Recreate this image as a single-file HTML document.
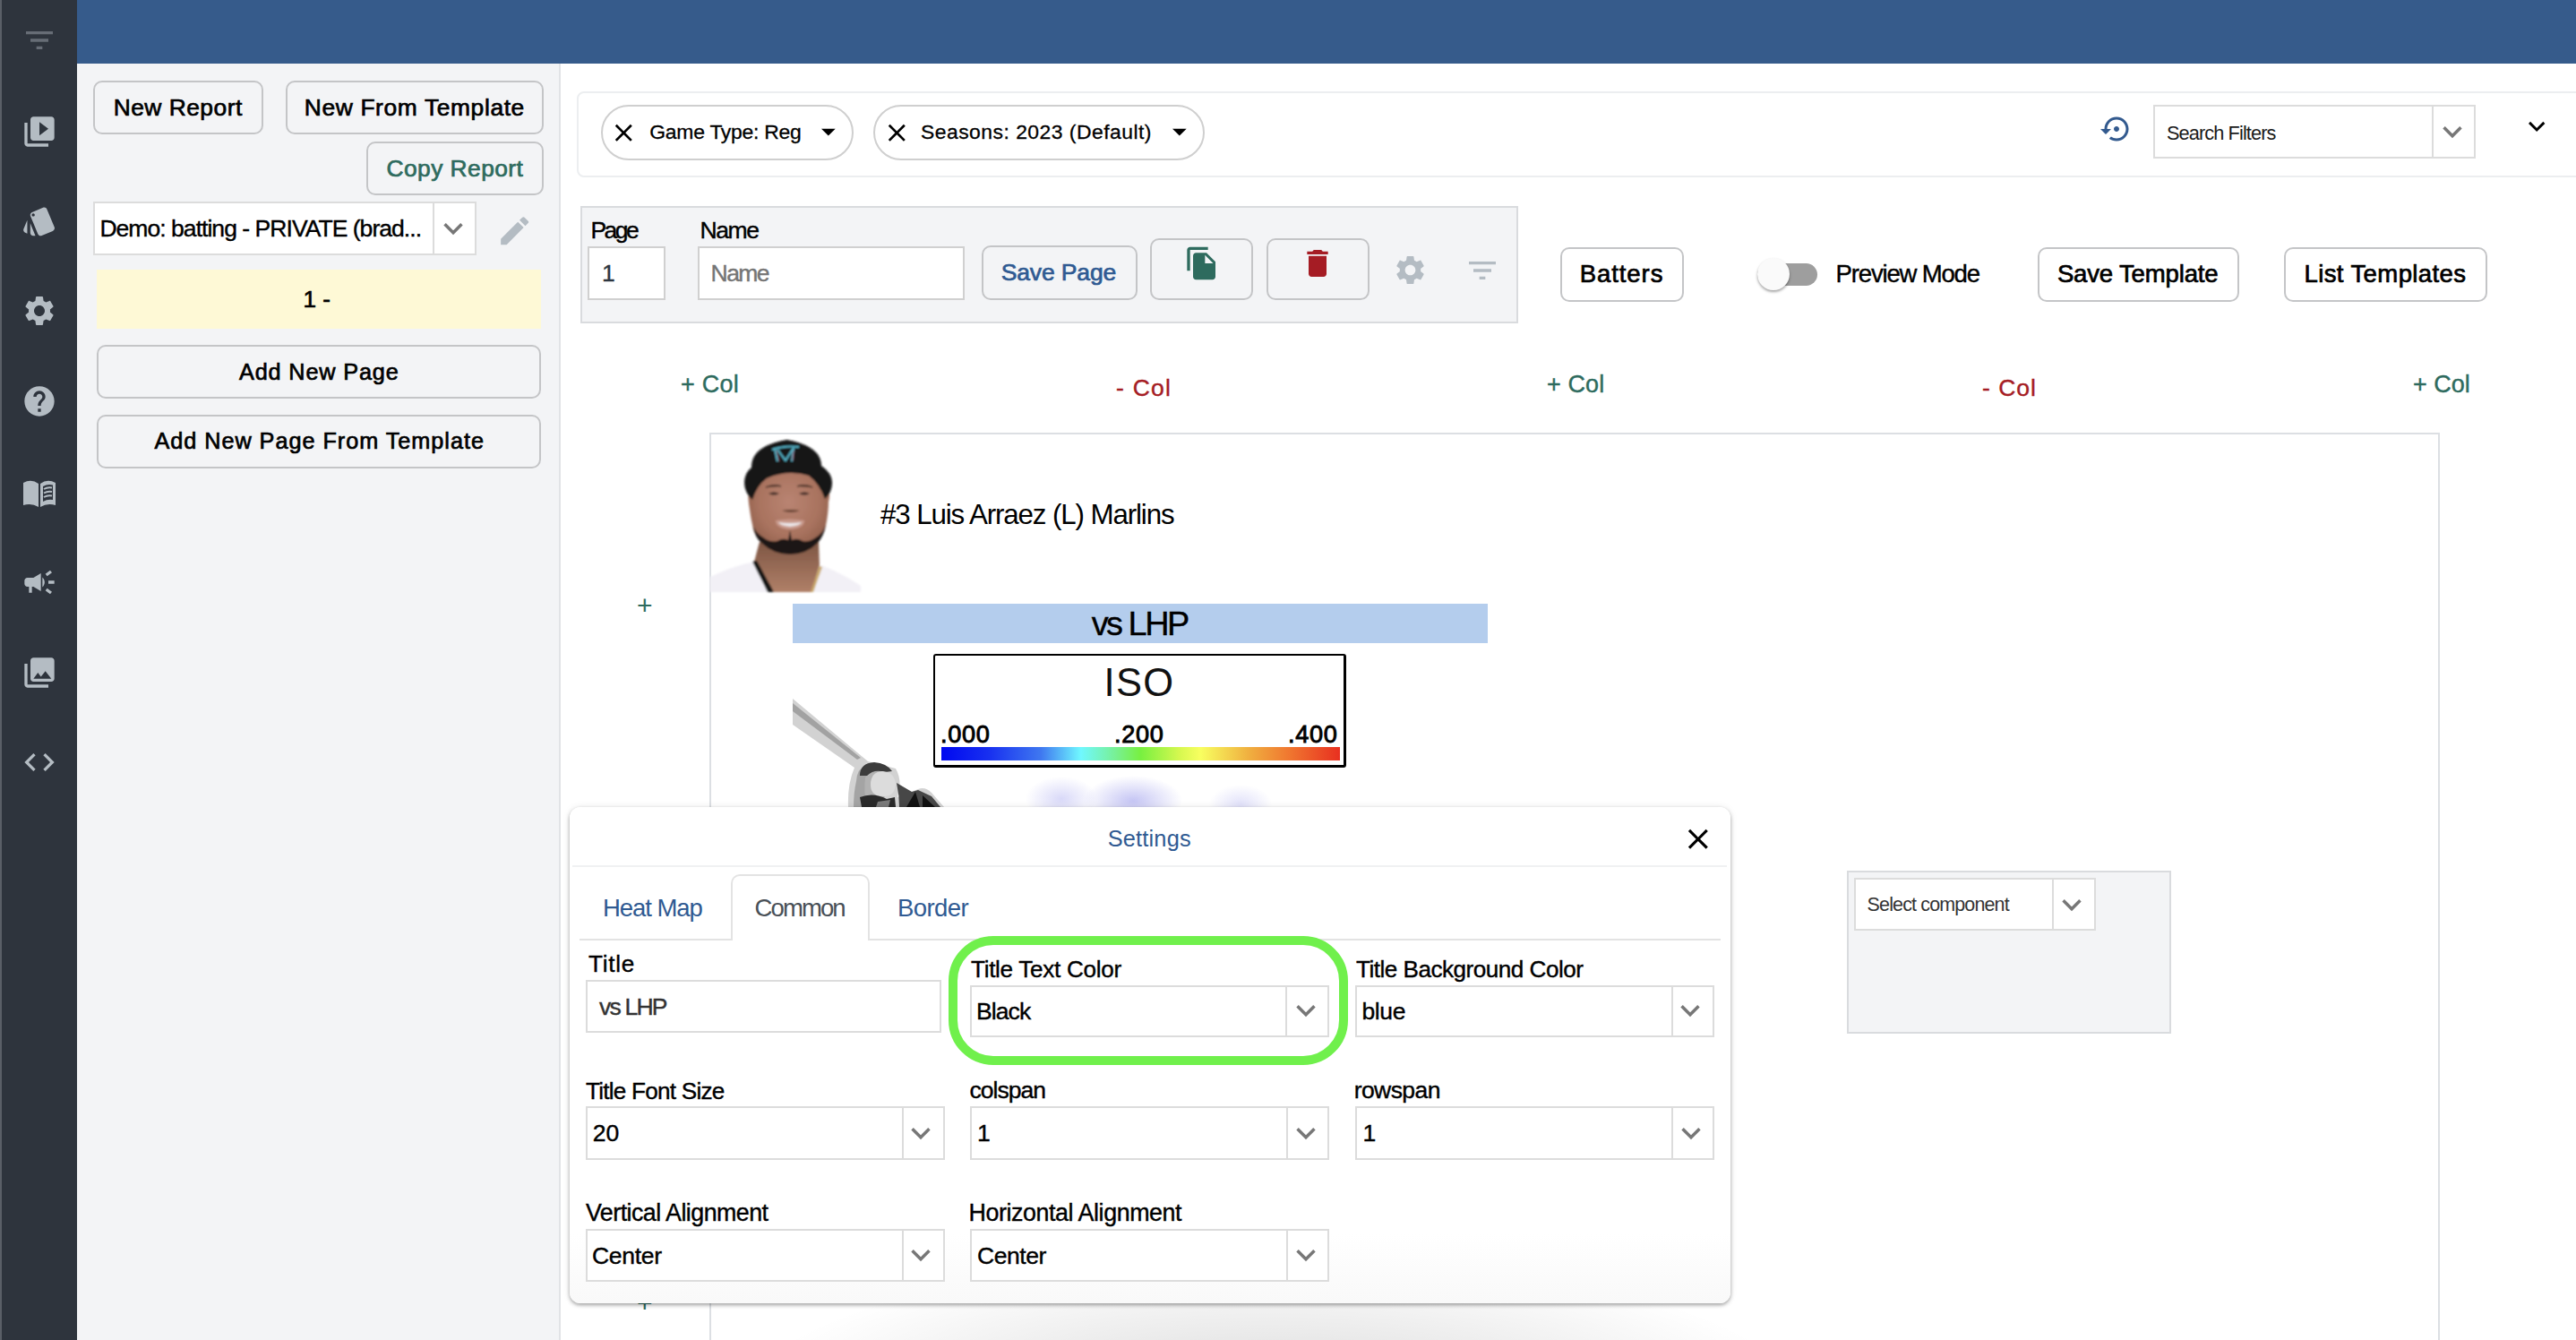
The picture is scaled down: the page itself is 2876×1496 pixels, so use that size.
<!DOCTYPE html>
<html><head><meta charset="utf-8">
<style>
html,body{margin:0;padding:0;}
body{width:2876px;height:1496px;position:relative;overflow:hidden;background:#fff;font-family:"Liberation Sans",sans-serif;color:#000;}
.a{position:absolute;box-sizing:border-box;}
.t{position:absolute;white-space:nowrap;line-height:1;font-family:"Liberation Sans",sans-serif;}
.btn{position:absolute;box-sizing:border-box;border:2px solid #c4c5c7;border-radius:10px;}
.sel{position:absolute;box-sizing:border-box;background:#fff;border:2px solid #dcdcdc;}
.sel .dv{position:absolute;top:0;bottom:0;width:2px;background:#dcdcdc;}
svg.i{position:absolute;overflow:visible;}
</style></head><body>

<!-- ================= sidebar ================= -->
<div class="a" style="left:0;top:0;width:2px;height:1496px;background:#5a5f67"></div>
<div class="a" style="left:2px;top:0;width:84px;height:1496px;background:#2e343d"></div>
<svg class="i" style="left:24px;top:25px" width="40" height="40" viewBox="0 0 24 24"><path fill="#676d76" d="M10 18h4v-2h-4v2zM3 6v2h18V6H3zm3 7h12v-2H6v2z"/></svg>
<svg class="i" style="left:24px;top:127px" width="40" height="40" viewBox="0 0 24 24"><path fill="#b4bcc3" d="M4 6H2v14c0 1.1.9 2 2 2h14v-2H4V6zm16-4H8c-1.1 0-2 .9-2 2v12c0 1.1.9 2 2 2h12c1.1 0 2-.9 2-2V4c0-1.1-.9-2-2-2zm-8 12.5v-9l6 4.5-6 4.5z"/></svg>
<svg class="i" style="left:24px;top:227px" width="40" height="40" viewBox="0 0 24 24"><path fill="#b4bcc3" d="M2.53 19.65l1.34.56v-9.03l-2.43 5.86c-.41 1.02.08 2.19 1.09 2.61zm19.5-3.7L17.07 3.98c-.31-.75-1.040-1.21-1.81-1.23-.26 0-.53.04-.79.15L7.1 5.95c-.75.31-1.21 1.03-1.23 1.8-.01.27.04.54.15.8l4.96 11.97c.31.76 1.05 1.22 1.83 1.23.26 0 .52-.05.77-.15l7.36-3.05c1.02-.42 1.51-1.59 1.09-2.6zM7.88 8.75c-.55 0-1-.45-1-1s.45-1 1-1 1 .45 1 1-.45 1-1 1zm-2 11c0 1.1.9 2 2 2h1.45l-3.450-8.34v6.34z"/></svg>
<svg class="i" style="left:24px;top:327px" width="40" height="40" viewBox="0 0 24 24"><path fill="#b4bcc3" d="M19.14,12.94c0.04-0.3,0.06-0.61,0.06-0.94c0-0.32-0.02-0.64-0.07-0.94l2.03-1.58c0.18-0.14,0.23-0.41,0.12-0.61 l-1.92-3.32c-0.12-0.22-0.37-0.29-0.59-0.22l-2.39,0.96c-0.5-0.38-1.03-0.7-1.62-0.94L14.4,2.81c-0.04-0.24-0.24-0.41-0.48-0.41 h-3.84c-0.24,0-0.43,0.17-0.47,0.41L9.25,5.35C8.66,5.59,8.12,5.92,7.63,6.29L5.24,5.33c-0.22-0.08-0.47,0-0.59,0.22L2.74,8.87 C2.62,9.08,2.66,9.34,2.86,9.48l2.03,1.58C4.84,11.36,4.8,11.69,4.8,12s0.02,0.64,0.07,0.94l-2.03,1.58 c-0.18,0.14-0.23,0.41-0.12,0.61l1.92,3.32c0.12,0.22,0.37,0.29,0.59,0.22l2.39-0.96c0.5,0.38,1.03,0.7,1.62,0.94l0.36,2.54 c0.05,0.24,0.24,0.41,0.48,0.41h3.84c0.24,0,0.44-0.17,0.47-0.41l0.36-2.54c0.59-0.24,1.13-0.56,1.62-0.94l2.39,0.96 c0.22,0.08,0.47,0,0.59-0.22l1.92-3.32c0.12-0.22,0.07-0.47-0.12-0.61L19.14,12.94z M12,15.6c-1.98,0-3.6-1.62-3.6-3.6 s1.62-3.6,3.6-3.6s3.6,1.62,3.6,3.6S13.98,15.6,12,15.6z"/></svg>
<svg class="i" style="left:24px;top:428px" width="40" height="40" viewBox="0 0 24 24"><path fill="#b4bcc3" d="M12 2C6.48 2 2 6.48 2 12s4.48 10 10 10 10-4.48 10-10S17.52 2 12 2zm1 17h-2v-2h2v2zm2.07-7.75l-.9.92C13.45 12.9 13 13.5 13 15h-2v-.5c0-1.1.45-2.1 1.17-2.83l1.24-1.26c.37-.36.59-.86.59-1.41 0-1.1-.9-2-2-2s-2 .9-2 2H8c0-2.21 1.79-4 4-4s4 1.79 4 4c0 .88-.36 1.68-.93 2.25z"/></svg>
<svg class="i" style="left:0;top:0" width="86" height="600" viewBox="0 0 86 600"><g fill="#b4bcc3"><path d="M26 539 Q35 534 43 540 L43 566 Q35 561 26 564 Z"/><path d="M45 540 Q53 534 62 539 L62 564 Q53 561 45 566 Z M48 543 L48 560 Q53 557 59 558 L59 541.5 Q53 540 48 543 Z"/></g><g stroke="#b4bcc3" stroke-width="2" fill="none"><path d="M49 546 Q53 543.5 58 544.5"/><path d="M49 550.5 Q53 548 58 549"/><path d="M49 555 Q53 552.5 58 553.5"/></g></svg>
<svg class="i" style="left:24px;top:630px" width="40" height="40" viewBox="0 0 24 24"><path fill="#b4bcc3" d="M18 11v2h4v-2h-4zm-2 6.61c.96.71 2.21 1.65 3.2 2.39.4-.53.8-1.070 1.2-1.6-.99-.74-2.24-1.68-3.2-2.4-.4.54-.8 1.08-1.2 1.61zM20.4 5.6c-.4-.53-.8-1.07-1.2-1.6-.99.74-2.24 1.68-3.2 2.4.4.53.8 1.07 1.2 1.6.96-.72 2.21-1.65 3.2-2.4zM4 9c-1.1 0-2 .9-2 2v2c0 1.1.9 2 2 2h1v4h2v-4h1l5 3V6L8 9H4zm11.5 3c0-1.33-.58-2.53-1.5-3.35v6.69c.92-.81 1.5-2.01 1.5-3.34z"/></svg>
<svg class="i" style="left:24px;top:731px" width="40" height="40" viewBox="0 0 24 24"><path fill="#b4bcc3" d="M22 16V4c0-1.1-.9-2-2-2H8c-1.1 0-2 .9-2 2v12c0 1.1.9 2 2 2h12c1.1 0 2-.9 2-2zm-11-4l2.03 2.71L16 11l4 5H8l3-4zM2 6v14c0 1.1.9 2 2 2h14v-2H4V6H2z"/></svg>
<svg class="i" style="left:24px;top:831px" width="40" height="40" viewBox="0 0 24 24"><path fill="#b4bcc3" d="M9.4 16.6L4.8 12l4.6-4.6L8 6l-6 6 6 6 1.4-1.4zm5.2 0l4.6-4.6-4.6-4.6L16 6l6 6-6 6-1.4-1.4z"/></svg>

<!-- ================= top bar ================= -->
<div class="a" style="left:86px;top:0;width:2790px;height:71px;background:#365b8b"></div>

<!-- ================= left panel ================= -->
<div class="a" style="left:86px;top:71px;width:540px;height:1425px;background:#f3f4f6;border-right:2px solid #e1e3e6"></div>
<div class="btn" style="left:104px;top:90px;width:190px;height:60px"></div>
<div class="btn" style="left:319px;top:90px;width:288px;height:60px"></div>
<div class="btn" style="left:409px;top:158px;width:198px;height:60px"></div>
<div class="sel" style="left:104px;top:225px;width:428px;height:60px"><div class="dv" style="left:377px"></div></div>
<svg class="i" style="left:484.6px;top:234.3px" width="42" height="42" viewBox="0 0 24 24"><polyline fill="none" stroke="#777" stroke-width="2" points="6.6,9.3 12,14.7 17.4,9.3"/></svg>
<svg class="i" style="left:553.8px;top:237px" width="41.3" height="41.3" viewBox="0 0 24 24"><path fill="#b4bcc3" d="M3 17.25V21h3.75L17.81 9.94l-3.75-3.75L3 17.25zM20.71 7.04c.39-.39.39-1.02 0-1.41l-2.34-2.34c-.39-.39-1.02-.39-1.41 0l-1.83 1.83 3.75 3.75 1.83-1.83z"/></svg>
<div class="a" style="left:108px;top:301px;width:496px;height:66px;background:#fef9d6"></div>
<div class="btn" style="left:108px;top:385px;width:496px;height:60px"></div>
<div class="btn" style="left:108px;top:463px;width:496px;height:60px"></div>

<!-- ================= filter card ================= -->
<div class="a" style="left:644px;top:102px;width:2300px;height:96px;border:2px solid #eceef0;border-radius:8px"></div>
<div class="a" style="left:671px;top:117px;width:282px;height:62px;border:2px solid #cfcfcf;border-radius:31px"></div>
<div class="a" style="left:975px;top:117px;width:370px;height:62px;border:2px solid #cfcfcf;border-radius:31px"></div>
<svg class="i" style="left:680.2px;top:131.8px" width="32.6" height="32.6" viewBox="0 0 24 24"><path fill="#000" d="M19 6.41L17.59 5 12 10.59 6.41 5 5 6.41 10.59 12 5 17.59 6.41 19 12 13.41 17.59 19 19 17.59 13.41 12z"/></svg>
<svg class="i" style="left:985.2px;top:131.8px" width="32.6" height="32.6" viewBox="0 0 24 24"><path fill="#000" d="M19 6.41L17.59 5 12 10.59 6.41 5 5 6.41 10.59 12 5 17.59 6.41 19 12 13.41 17.59 19 19 17.59 13.41 12z"/></svg>
<svg class="i" style="left:906.3px;top:128.3px" width="37.7" height="37.7" viewBox="0 0 24 24"><path fill="#000" d="M7 10l5 5 5-5z"/></svg>
<svg class="i" style="left:1298px;top:128.3px" width="37.7" height="37.7" viewBox="0 0 24 24"><path fill="#000" d="M7 10l5 5 5-5z"/></svg>
<svg class="i" style="left:2344.5px;top:126px" width="36" height="36" viewBox="0 0 24 24"><path fill="#335a8e" d="M14 12c0-1.1-.9-2-2-2s-2 .9-2 2 .9 2 2 2 2-.9 2-2zm-2-9c-4.97 0-9 4.03-9 9H0l4 4 4-4H5c0-3.87 3.13-7 7-7s7 3.13 7 7-3.13 7-7 7c-1.51 0-2.91-.49-4.06-1.3l-1.42 1.44C8.04 20.3 9.94 21 12 21c4.97 0 9-4.03 9-9s-4.03-9-9-9z"/></svg>
<div class="sel" style="left:2404px;top:117px;width:360px;height:60px"><div class="dv" style="left:309px"></div></div>
<svg class="i" style="left:2716.5px;top:126.1px" width="42" height="42" viewBox="0 0 24 24"><polyline fill="none" stroke="#777" stroke-width="2" points="6.6,9.3 12,14.7 17.4,9.3"/></svg>
<svg class="i" style="left:2813.4px;top:122.3px" width="38.4" height="38.4" viewBox="0 0 24 24"><polyline fill="none" stroke="#000" stroke-width="1.8" points="6.9,9.3 12,14.4 17.1,9.3"/></svg>

<!-- ================= page card ================= -->
<div class="a" style="left:648px;top:230px;width:1047px;height:131px;background:#f3f4f6;border:2px solid #d9dbde"></div>
<div class="sel" style="left:656px;top:275px;width:87px;height:60px;border-color:#d0d0d0"></div>
<div class="sel" style="left:779px;top:275px;width:298px;height:60px;border-color:#d0d0d0"></div>
<div class="btn" style="left:1096px;top:274px;width:174px;height:61px"></div>
<div class="btn" style="left:1284px;top:266px;width:115px;height:69px"></div>
<div class="btn" style="left:1414px;top:266px;width:115px;height:69px"></div>
<svg class="i" style="left:1321.7px;top:274.3px" width="40" height="40" viewBox="0 0 24 24"><path fill="#2e6b5e" d="M16 1H4c-1.1 0-2 .9-2 2v14h2V3h12V1zm-1 4l6 6v10c0 1.1-.9 2-2 2H7.99C6.89 23 6 22.1 6 21l.01-14c0-1.1.89-2 1.99-2h7zm-1 7h5.5L14 6.5V12z"/></svg>
<svg class="i" style="left:1451.2px;top:273.6px" width="40" height="40" viewBox="0 0 24 24"><path fill="#a51c24" d="M6 19c0 1.1.9 2 2 2h8c1.1 0 2-.9 2-2V7H6v12zM19 4h-3.5l-1-1h-5l-1 1H5v2h14V4z"/></svg>
<svg class="i" style="left:1555.4px;top:282.4px" width="39" height="39" viewBox="0 0 24 24"><path fill="#b4bcc3" d="M19.14,12.94c0.04-0.3,0.06-0.61,0.06-0.94c0-0.32-0.02-0.64-0.07-0.94l2.03-1.58c0.18-0.14,0.23-0.41,0.12-0.61 l-1.92-3.32c-0.12-0.22-0.37-0.29-0.59-0.22l-2.39,0.96c-0.5-0.38-1.03-0.7-1.62-0.94L14.4,2.81c-0.04-0.24-0.24-0.41-0.48-0.41 h-3.84c-0.24,0-0.43,0.17-0.47,0.41L9.25,5.35C8.66,5.590,8.12,5.92,7.63,6.29L5.24,5.33c-0.22-0.08-0.47,0-0.59,0.22L2.74,8.87 C2.62,9.08,2.66,9.34,2.86,9.48l2.03,1.58C4.84,11.36,4.8,11.69,4.8,12s0.02,0.64,0.07,0.94l-2.03,1.58 c-0.18,0.14-0.23,0.41-0.12,0.61l1.92,3.32c0.12,0.22,0.37,0.29,0.59,0.22l2.39-0.96c0.5,0.38,1.03,0.7,1.62,0.94l0.36,2.54 c0.05,0.24,0.24,0.41,0.48,0.41h3.84c0.24,0,0.44-0.17,0.47-0.41l0.36-2.54c0.59-0.24,1.13-0.56,1.62-0.94l2.39,0.96 c0.22,0.08,0.47,0,0.59-0.22l1.92-3.32c0.12-0.22,0.07-0.47-0.12-0.61L19.14,12.94z M12,15.6c-1.98,0-3.6-1.62-3.6-3.6 s1.62-3.6,3.6-3.6s3.6,1.62,3.6,3.6S13.98,15.6,12,15.6z"/></svg>
<svg class="i" style="left:1635px;top:282px" width="40" height="40" viewBox="0 0 24 24"><path fill="#b4bcc3" d="M10 18h4v-2h-4v2zM3 6v2h18V6H3zm3 7h12v-2H6v2z"/></svg>

<div class="btn" style="left:1742px;top:276px;width:138px;height:61px"></div>
<div class="a" style="left:1962px;top:294px;width:67px;height:25px;border-radius:13px;background:#9e9e9e"></div>
<div class="a" style="left:1962px;top:288px;width:36px;height:36px;border-radius:50%;background:#fafafa;box-shadow:0 2px 3px rgba(0,0,0,.35)"></div>
<div class="btn" style="left:2275px;top:276px;width:225px;height:61px"></div>
<div class="btn" style="left:2550px;top:276px;width:227px;height:61px"></div>

<!-- ================= report frame ================= -->
<div class="a" style="left:792px;top:483px;width:1932px;height:1100px;border:2px solid #dcdfe3"></div>
<svg class="i" style="left:792px;top:483px" width="170" height="178" viewBox="792 483 170 178">
 <defs><filter id="bl" x="-10%" y="-10%" width="120%" height="120%"><feGaussianBlur stdDeviation="0.8"/></filter>
 <radialGradient id="skin" cx="0.5" cy="0.42" r="0.62"><stop offset="0" stop-color="#b98472"/><stop offset="0.6" stop-color="#a9735f"/><stop offset="1" stop-color="#8c5c48"/></radialGradient>
 <linearGradient id="neck" x1="0" y1="0" x2="0" y2="1"><stop offset="0" stop-color="#7e5644"/><stop offset="1" stop-color="#b08068"/></linearGradient></defs>
 <g filter="url(#bl)">
 <path fill="#f2f0f6" d="M793 644 Q818 632 842 627 L860 661 L906 661 L917 631 Q940 640 961 654 L961 661 L793 661 Z"/>
 <path fill="url(#neck)" d="M848 605 L914 605 L915 631 L906 661 L860 661 L842 627 Z"/>
 <path fill="#141414" d="M840 627 L845 626 L864 661 L857 661 Z"/>
 <path fill="#c9a86a" d="M915 632 L918 633 L908 661 L905 661 Z"/>
 <path fill="url(#skin)" d="M836 548 Q835 556 836 562 Q838 578 841 591 Q844 600 850 605 Q864 618 882 618 Q900 618 912 605 Q919 598 922 587 Q925 572 925 560 Q927 553 925 546 L922 530 Q880 508 838 530 Z"/>
 <path fill="#1a1614" d="M841 588 Q843 600 850 606 Q864 619 882 619 Q900 619 913 606 Q920 598 922 586 Q918 596 911 600 Q902 606 896 604 Q890 600 884 603 L882 592 L880 603 Q874 600 868 604 Q860 606 852 600 Q845 596 841 588 Z"/>
 <path fill="#c8988a" d="M866 581 Q882 578 898 581 Q898 590 882 591 Q866 590 866 581 Z"/>
 <path fill="#ebe6e8" d="M869 583 Q882 585 895 583 Q893 587 882 588 Q871 587 869 583 Z"/>
 <path fill="#6a4434" d="M873 570 Q883 574 893 570 Q883 568 873 570 Z"/>
 <path fill="#3a2822" d="M858 551 Q864 548 870 551 Q864 554 858 551 Z M892 551 Q898 548 904 551 Q898 554 892 551 Z"/>
 <path fill="#4a3228" d="M855 544 Q865 540 872 543 M890 543 Q898 540 907 544" stroke="#4a3228" stroke-width="1.5"/>
 <path fill="#131313" d="M831 539 Q831 528 839 522 Q838 498 878.5 491 Q917 498 917 520 Q929 528 929 539 Q929 550 921 557 Q915 540 903 531 Q880 524 856 534 Q845 542 840 558 Q831 550 831 539 Z"/>
 <path fill="none" stroke="#57b7cc" stroke-width="2" d="M865 500 L868 515 M868 502 L877 514 L886 500 L884 515 M862 502 Q876 497 892 499"/>
 <path fill="none" stroke="#c84a66" stroke-width="0.9" d="M867 503 L870 515 M886 503 L885 514" opacity="0.8"/>
 </g>
</svg>
<div class="a" style="left:885px;top:674px;width:776px;height:44px;background:#b4cded"></div>
<div class="a" style="left:1042px;top:730px;width:461px;height:127px;border:3px solid #000;border-top-width:2px;border-left-width:2px;border-radius:3px;background:#fff"></div>
<div class="a" style="left:1051px;top:834px;width:445px;height:15px;background:linear-gradient(90deg,#0008f0 0%,#1830f0 12%,#3f78f0 25%,#70f8ff 35%,#78f090 44%,#78f040 50%,#d8f850 60%,#f8ff60 65%,#f0b040 77%,#f07830 87%,#e83020 100%)"></div>
<svg class="i" style="left:880px;top:770px" width="180" height="131" viewBox="880 770 180 131">
 <path fill="#d2d2d2" d="M885 780 L969 850 L1000 858 Q1008 872 1002 890 L1025 881 Q1033 878 1040 885 L1054 901 L947 901 Q946 875 954 857 L885 809 Z"/>
 <path fill="#a2a2a2" d="M885 785 L961 846 L957 848 L885 794 Z"/>
 <path fill="#a4a4a4" d="M956 872 Q957 858 966 855 L970 870 Q966 885 968 901 L953 901 Q953 885 956 872 Z"/>
 <path fill="#b2b2b2" d="M966 868 Q972 858 985 860 L988 895 L968 901 Q964 885 966 868 Z"/>
 <path fill="#3c3c3c" d="M960 866 Q960 852 976 851 Q990 852 996 861 L988 862 Q976 858 968 866 Z"/>
 <path fill="#dcdcdc" d="M972 876 Q972 862 985 861 Q999 862 1000 876 Q999 888 988 889 Q972 890 972 876 Z"/>
 <path fill="#2a2a2a" d="M960 890 Q975 884 990 892 L999 890 L1000 901 L962 901 Z"/>
 <path fill="#7a7a7a" d="M980 895 L994 893 L992 901 L978 901 Z"/>
 <path fill="#474747" d="M1001 874 L1018 884 L1025 882 L1040 889 L1050 901 L1004 901 Q1004 888 1001 874 Z"/>
 <path fill="#111" d="M1012 901 L1022 884 L1027 901 Z M1030 901 L1030 888 L1044 901 Z"/>
</svg>
<div class="a" style="left:1050px;top:862px;width:500px;height:50px;background:radial-gradient(ellipse 40px 25px at 135px 30px,rgba(170,170,240,.45),rgba(170,170,240,0)),radial-gradient(ellipse 55px 28px at 215px 32px,rgba(150,150,235,.55),rgba(150,150,235,0)),radial-gradient(ellipse 35px 22px at 335px 36px,rgba(170,170,240,.35),rgba(170,170,240,0))"></div>

<!-- select component card -->
<div class="a" style="left:2062px;top:972px;width:362px;height:182px;background:#f3f4f6;border:2px solid #d9dbde"></div>
<div class="sel" style="left:2070px;top:980px;width:270px;height:59px"><div class="dv" style="left:219px"></div></div>
<svg class="i" style="left:2292.4px;top:988.5px" width="42" height="42" viewBox="0 0 24 24"><polyline fill="none" stroke="#777" stroke-width="2" points="6.6,9.3 12,14.7 17.4,9.3"/></svg>

<div class="t" style="left:711.0px;top:1440.0px;font-size:30px;color:#2e6b5e;">+</div>
<!-- ================= modal ================= -->
<div class="a" style="left:800px;top:1300px;width:1300px;height:400px;background:radial-gradient(ellipse 600px 170px at 620px 270px,rgba(0,0,0,.16),rgba(0,0,0,.08) 50%,rgba(0,0,0,0) 100%)"></div>
<div class="a" style="left:636px;top:901px;width:1296px;height:554px;background:linear-gradient(to bottom,#fff 86%,#f9f9f9 100%);border-radius:12px;box-shadow:0 2px 4px rgba(0,0,0,.35),0 0 10px rgba(0,0,0,.07)"></div>
<svg class="i" style="left:1877px;top:918px" width="37.7" height="37.7" viewBox="0 0 24 24"><path fill="#000" d="M19 6.41L17.59 5 12 10.59 6.41 5 5 6.41 10.59 12 5 17.59 6.41 19 12 13.41 17.59 19 19 17.59 13.41 12z"/></svg>
<div class="a" style="left:639px;top:966px;width:1289px;height:2px;background:#f0f1f2"></div>
<div class="a" style="left:647px;top:1048px;width:1274px;height:2px;background:#e3e3e3"></div>
<div class="a" style="left:816px;top:976px;width:155px;height:74px;background:#fff;border:2px solid #e3e3e3;border-bottom:none;border-radius:10px 10px 0 0"></div>

<div class="sel" style="left:654px;top:1094px;width:397px;height:59px"></div>
<div class="sel" style="left:1083px;top:1100px;width:401px;height:58px"><div class="dv" style="left:350px"></div></div>
<svg class="i" style="left:1436.6px;top:1107px" width="42" height="42" viewBox="0 0 24 24"><polyline fill="none" stroke="#777" stroke-width="2" points="6.6,9.3 12,14.7 17.4,9.3"/></svg>
<div class="sel" style="left:1513px;top:1100px;width:401px;height:58px"><div class="dv" style="left:351px"></div></div>
<svg class="i" style="left:1866px;top:1107px" width="42" height="42" viewBox="0 0 24 24"><polyline fill="none" stroke="#777" stroke-width="2" points="6.6,9.3 12,14.7 17.4,9.3"/></svg>
<div class="a" style="left:1059px;top:1045px;width:446px;height:144px;border:10px solid #70f04c;border-radius:50px"></div>

<div class="sel" style="left:654px;top:1235px;width:401px;height:60px"><div class="dv" style="left:351px"></div></div>
<svg class="i" style="left:1007px;top:1244px" width="42" height="42" viewBox="0 0 24 24"><polyline fill="none" stroke="#777" stroke-width="2" points="6.6,9.3 12,14.7 17.4,9.3"/></svg>
<div class="sel" style="left:1083px;top:1235px;width:401px;height:60px"><div class="dv" style="left:351px"></div></div>
<svg class="i" style="left:1436.7px;top:1244px" width="42" height="42" viewBox="0 0 24 24"><polyline fill="none" stroke="#777" stroke-width="2" points="6.6,9.3 12,14.7 17.4,9.3"/></svg>
<div class="sel" style="left:1513px;top:1235px;width:401px;height:60px"><div class="dv" style="left:351px"></div></div>
<svg class="i" style="left:1866.5px;top:1244px" width="42" height="42" viewBox="0 0 24 24"><polyline fill="none" stroke="#777" stroke-width="2" points="6.6,9.3 12,14.7 17.4,9.3"/></svg>

<div class="sel" style="left:654px;top:1372px;width:401px;height:59px"><div class="dv" style="left:351px"></div></div>
<svg class="i" style="left:1007px;top:1380px" width="42" height="42" viewBox="0 0 24 24"><polyline fill="none" stroke="#777" stroke-width="2" points="6.6,9.3 12,14.7 17.4,9.3"/></svg>
<div class="sel" style="left:1083px;top:1372px;width:401px;height:59px"><div class="dv" style="left:351px"></div></div>
<svg class="i" style="left:1436.7px;top:1380px" width="42" height="42" viewBox="0 0 24 24"><polyline fill="none" stroke="#777" stroke-width="2" points="6.6,9.3 12,14.7 17.4,9.3"/></svg>

<div class="t" style="left:126.7px;top:106.68px;font-size:26.38px;color:#000;letter-spacing:0.478px;-webkit-text-stroke:0.7px #000;">New Report</div>
<div class="t" style="left:339.8px;top:106.68px;font-size:26.38px;color:#000;letter-spacing:0.625px;-webkit-text-stroke:0.7px #000;">New From Template</div>
<div class="t" style="left:431.5px;top:175.08px;font-size:26.38px;color:#2e6b5e;letter-spacing:0.43px;-webkit-text-stroke:0.7px #2e6b5e;">Copy Report</div>
<div class="t" style="left:111.4px;top:242.46px;font-size:26.52px;color:#000;letter-spacing:-0.965px;-webkit-text-stroke:0.4px #000;">Demo: batting - PRIVATE (brad...</div>
<div class="t" style="left:338.6px;top:320.83px;font-size:26.09px;color:#000;-webkit-text-stroke:0.7px #000;">1 -</div>
<div class="t" style="left:267.0px;top:402.77px;font-size:25.22px;color:#000;letter-spacing:0.864px;-webkit-text-stroke:0.7px #000;">Add New Page</div>
<div class="t" style="left:172.4px;top:480.47px;font-size:25.22px;color:#000;letter-spacing:0.984px;-webkit-text-stroke:0.7px #000;">Add New Page From Template</div>
<div class="t" style="left:725.3px;top:135.54px;font-size:22.9px;color:#000;letter-spacing:-0.238px;-webkit-text-stroke:0.3px #000;">Game Type: Reg</div>
<div class="t" style="left:1028.0px;top:135.54px;font-size:22.9px;color:#000;letter-spacing:0.482px;-webkit-text-stroke:0.3px #000;">Seasons: 2023 (Default)</div>
<div class="t" style="left:2419.0px;top:137.52px;font-size:21.74px;color:#1a1a1a;letter-spacing:-0.9px;">Search Filters</div>
<div class="t" style="left:659.5px;top:244.46px;font-size:26.52px;color:#000;letter-spacing:-2.567px;-webkit-text-stroke:0.4px #000;">Page</div>
<div class="t" style="left:781.6px;top:244.46px;font-size:26.52px;color:#000;letter-spacing:-1.433px;-webkit-text-stroke:0.4px #000;">Name</div>
<div class="t" style="left:672.0px;top:292.26px;font-size:26.52px;color:#2d3640;-webkit-text-stroke:0.4px #2d3640;">1</div>
<div class="t" style="left:793.6px;top:292.26px;font-size:26.52px;color:#757575;letter-spacing:-1.6px;-webkit-text-stroke:0.4px #757575;">Name</div>
<div class="t" style="left:1117.7px;top:291.46px;font-size:26.52px;color:#2f5a92;letter-spacing:-0.138px;-webkit-text-stroke:0.7px #2f5a92;">Save Page</div>
<div class="t" style="left:1763.7px;top:291.59px;font-size:27.54px;color:#000;letter-spacing:0.917px;-webkit-text-stroke:0.7px #000;">Batters</div>
<div class="t" style="left:2049.6px;top:291.59px;font-size:27.54px;color:#000;letter-spacing:-1.182px;-webkit-text-stroke:0.4px #000;">Preview Mode</div>
<div class="t" style="left:2296.9px;top:291.59px;font-size:27.54px;color:#000;letter-spacing:-0.158px;-webkit-text-stroke:0.7px #000;">Save Template</div>
<div class="t" style="left:2572.5px;top:291.59px;font-size:27.54px;color:#000;letter-spacing:0.392px;-webkit-text-stroke:0.7px #000;">List Templates</div>
<div class="t" style="left:760.0px;top:415.69px;font-size:26.96px;color:#2e6b5e;letter-spacing:0.25px;-webkit-text-stroke:0.4px #2e6b5e;">+ Col</div>
<div class="t" style="left:1246.0px;top:419.76px;font-size:26.52px;color:#a51c24;letter-spacing:1.25px;-webkit-text-stroke:0.4px #a51c24;">- Col</div>
<div class="t" style="left:1727.0px;top:415.69px;font-size:26.96px;color:#2e6b5e;letter-spacing:0.125px;-webkit-text-stroke:0.4px #2e6b5e;">+ Col</div>
<div class="t" style="left:2213.0px;top:419.76px;font-size:26.52px;color:#a51c24;letter-spacing:1.0px;-webkit-text-stroke:0.4px #a51c24;">- Col</div>
<div class="t" style="left:2694.0px;top:415.69px;font-size:26.96px;color:#2e6b5e;-webkit-text-stroke:0.4px #2e6b5e;">+ Col</div>
<div class="t" style="left:983.0px;top:558.99px;font-size:31.3px;color:#000;letter-spacing:-1.12px;">#3 Luis Arraez (L) Marlins</div>
<div class="t" style="left:1218.7px;top:677.55px;font-size:37.83px;color:#000;letter-spacing:-2.48px;-webkit-text-stroke:0.4px #000;">vs LHP</div>
<div class="t" style="left:1232.6px;top:741.04px;font-size:43.48px;color:#111;letter-spacing:1.35px;">ISO</div>
<div class="t" style="left:1050.0px;top:805.66px;font-size:27.1px;color:#000;letter-spacing:0.667px;-webkit-text-stroke:0.9px #000;">.000</div>
<div class="t" style="left:1244.0px;top:805.66px;font-size:27.1px;color:#000;letter-spacing:0.667px;-webkit-text-stroke:0.9px #000;">.200</div>
<div class="t" style="left:1438.0px;top:805.66px;font-size:27.1px;color:#000;letter-spacing:0.667px;-webkit-text-stroke:0.9px #000;">.400</div>
<div class="t" style="left:1236.7px;top:924.44px;font-size:25.36px;color:#2f5a92;letter-spacing:0.186px;">Settings</div>
<div class="t" style="left:673.0px;top:999.59px;font-size:27.54px;color:#2f5a92;letter-spacing:-1.071px;">Heat Map</div>
<div class="t" style="left:842.5px;top:999.59px;font-size:27.54px;color:#495057;letter-spacing:-1.9px;">Common</div>
<div class="t" style="left:1002.0px;top:999.59px;font-size:27.54px;color:#2f5a92;letter-spacing:-0.6px;">Border</div>
<div class="t" style="left:657.0px;top:1062.83px;font-size:26.09px;color:#000;letter-spacing:0.75px;-webkit-text-stroke:0.4px #000;">Title</div>
<div class="t" style="left:669.0px;top:1111.16px;font-size:26.52px;color:#333;letter-spacing:-1.8px;-webkit-text-stroke:0.4px #333;">vs LHP</div>
<div class="t" style="left:1084.0px;top:1068.83px;font-size:26.09px;color:#000;letter-spacing:-0.293px;-webkit-text-stroke:0.4px #000;">Title Text Color</div>
<div class="t" style="left:1090.0px;top:1116.46px;font-size:26.52px;color:#000;letter-spacing:-0.9px;-webkit-text-stroke:0.4px #000;">Black</div>
<div class="t" style="left:1514.0px;top:1068.83px;font-size:26.09px;color:#000;letter-spacing:-0.495px;-webkit-text-stroke:0.4px #000;">Title Background Color</div>
<div class="t" style="left:1520.4px;top:1116.27px;font-size:26.5px;color:#000;letter-spacing:-0.367px;-webkit-text-stroke:0.4px #000;">blue</div>
<div class="t" style="left:654.0px;top:1204.83px;font-size:26.09px;color:#000;letter-spacing:-0.743px;-webkit-text-stroke:0.4px #000;">Title Font Size</div>
<div class="t" style="left:1082.6px;top:1204.47px;font-size:26.5px;color:#000;letter-spacing:-1.0px;-webkit-text-stroke:0.4px #000;">colspan</div>
<div class="t" style="left:1511.7px;top:1204.17px;font-size:26.5px;color:#000;letter-spacing:-0.567px;-webkit-text-stroke:0.4px #000;">rowspan</div>
<div class="t" style="left:661.7px;top:1252.46px;font-size:26.52px;color:#000;-webkit-text-stroke:0.4px #000;">20</div>
<div class="t" style="left:1091.0px;top:1252.46px;font-size:26.52px;color:#000;-webkit-text-stroke:0.4px #000;">1</div>
<div class="t" style="left:1521.6px;top:1252.46px;font-size:26.52px;color:#000;-webkit-text-stroke:0.4px #000;">1</div>
<div class="t" style="left:654.0px;top:1340.71px;font-size:26.81px;color:#000;letter-spacing:-0.529px;-webkit-text-stroke:0.4px #000;">Vertical Alignment</div>
<div class="t" style="left:1081.6px;top:1340.71px;font-size:26.81px;color:#000;letter-spacing:-0.416px;-webkit-text-stroke:0.4px #000;">Horizontal Alignment</div>
<div class="t" style="left:661.0px;top:1389.46px;font-size:26.52px;color:#000;letter-spacing:-0.3px;-webkit-text-stroke:0.4px #000;">Center</div>
<div class="t" style="left:1091.0px;top:1389.46px;font-size:26.52px;color:#000;letter-spacing:-0.46px;-webkit-text-stroke:0.4px #000;">Center</div>
<div class="t" style="left:2084.6px;top:999.57px;font-size:21.45px;color:#333;letter-spacing:-0.84px;">Select component</div>
<div class="t" style="left:711.0px;top:661.0px;font-size:30px;color:#2e6b5e;">+</div>

</body></html>
